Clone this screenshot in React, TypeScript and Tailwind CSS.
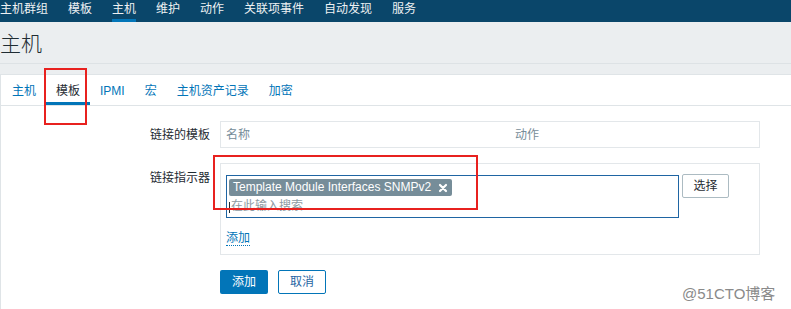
import React from 'react';

const navItems = ['主机群组', '模板', '主机', '维护', '动作', '关联项事件', '自动发现', '服务'];
const tabs = ['主机', '模板', 'IPMI', '宏', '主机资产记录', '加密'];

const font = { fontFamily: '"Liberation Sans", "Noto Sans CJK SC", sans-serif' };

const App = () => {
  return (
    <div
      className="relative w-[791px] h-[309px] overflow-hidden bg-[#ebeef0] text-[#1f2c33] text-[12px]"
      style={font}
    >
      {/* Top menu */}
      <nav className="flex h-[22px] bg-[#0a466a]">
        {navItems.map((item) => (
          <div key={item} className="relative mr-5 leading-[18px] text-[12px] text-[#eef1f3]">
            {item}
            {item === '主机' && (
              <span className="absolute left-0 right-0 bottom-0 h-[3px] bg-[#0275b8]" />
            )}
          </div>
        ))}
      </nav>

      {/* Page title */}
      <div className="h-[42px] border-b border-[#dde2e5] pt-[10px]">
        <h1 className="text-[21px] leading-[24px] font-light text-[#1f2c33]">主机</h1>
      </div>

      {/* Content panel */}
      <div className="mt-[10px] h-[240px] bg-white border-t border-l border-[#dfe4e7]">
        <div className="flex h-[31px] pl-[1px] border-b border-[#dfe4e7]">
          {tabs.map((tab) => (
            <div
              key={tab}
              className={
                tab === '模板'
                  ? 'px-[10px] pt-[8px] text-[12px] leading-[16px] text-[#1f2c33] border-b-[3px] border-[#0275b8]'
                  : 'px-[10px] pt-[8px] text-[12px] leading-[16px] text-[#0275b8]'
              }
            >
              {tab}
            </div>
          ))}
        </div>

        <div className="grid grid-cols-[209px_540px] gap-x-[10px] gap-y-[15px] pt-[15px]">
          <div className="text-right pt-[5px] leading-[18px]">链接的模板</div>
          <div className="flex h-[27px] items-center border border-[#e3e7ea] text-[#768d99]">
            <span className="pl-[5px] w-[294px]">名称</span>
            <span>动作</span>
          </div>

          <div className="text-right pt-[6px] leading-[18px]">链接指示器</div>
          <div className="h-[92px] border border-[#e3e7ea] pt-[11px] px-[5px]">
            <div className="flex items-start">
              <div className="w-[453px] h-[43px] border border-[#1f65a3] pl-[2px] pt-[2px]">
                <span className="inline-flex items-center h-[17px] px-[4px] rounded-[2px] bg-[#768d99] text-white text-[12px] leading-[17px]">
                  Template Module Interfaces SNMPv2
                  <svg width="10" height="10" viewBox="0 0 10 10" className="ml-[7px]">
                    <path d="M2 2 L8 8 M8 2 L2 8" stroke="white" strokeWidth="2.2" strokeLinecap="round" />
                  </svg>
                </span>
                <div className="flex items-center mt-[3px] h-[14px] leading-[14px]">
                  <span className="w-[1px] h-[11px] bg-[#1f2c33] mr-[1px] mt-[3px]" />
                  <span className="text-[#8e9ba3]">在此输入搜索</span>
                </div>
              </div>
              <button className="ml-[3px] -mt-[1px] w-[47px] h-[24px] rounded-[2px] border border-[#acbbc2] bg-white text-[#1f2c33] text-[12px]">
                选择
              </button>
            </div>
            <div className="mt-[11px] leading-[18px]">
              <span className="text-[#0275b8] border-b border-dotted border-[#0275b8]">添加</span>
            </div>
          </div>

          <div />
          <div className="flex gap-[10px]">
            <button className="w-[48px] h-[24px] rounded-[2px] bg-[#0275b8] text-white text-[12px]">添加</button>
            <button className="w-[48px] h-[24px] rounded-[2px] border border-[#0275b8] bg-white text-[#1f65a3] text-[12px]">
              取消
            </button>
          </div>
        </div>
      </div>

      {/* Annotation boxes */}
      <div className="absolute left-[44px] top-[68px] w-[43px] h-[57px] border-2 border-[#e8211f]" />
      <div className="absolute left-[213px] top-[155px] w-[265px] h-[55px] border-2 border-[#e8211f]" />

      {/* Watermark */}
      <div className="absolute left-[682px] top-[283px] text-[15px] text-[#8a8a8a]">@51CTO博客</div>
    </div>
  );
};

export default App;
